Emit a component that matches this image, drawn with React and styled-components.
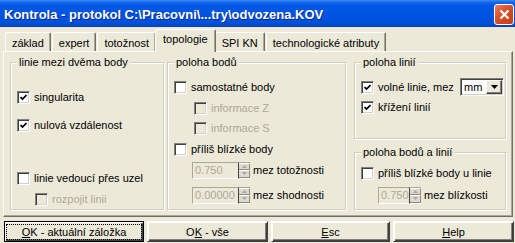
import React from "react";
import styled, { createGlobalStyle } from "styled-components";

const Global = createGlobalStyle`
  html, body {
    margin: 0;
    padding: 0;
  }
  body {
    background: #ece9d8;
    font-family: "Liberation Sans", Arial, sans-serif;
    font-size: 11px;
    color: #000;
    width: 515px;
    height: 243px;
    overflow: hidden;
  }
`;

const Window = styled.div`
  width: 515px;
  height: 243px;
  display: flex;
  flex-direction: column;
  background: #ece9d8;
`;

const TitleBar = styled.div`
  height: 27px;
  display: flex;
  align-items: flex-start;
  justify-content: space-between;
  background: linear-gradient(
    to bottom,
    #3b8cf5 0px,
    #166ceb 2px,
    #0258e4 5px,
    #0054e3 50%,
    #0050da 85%,
    #0043c0 100%
  );
`;

const TitleText = styled.div`
  padding: 7px 0 0 4px;
  color: #fff;
  font-size: 13px;
  font-weight: bold;
  line-height: 15px;
  white-space: nowrap;
  text-shadow: 1px 1px 0 #0a2a8a;
`;

const CloseButton = styled.div`
  width: 20px;
  height: 21px;
  margin: 4px 1px 0 0;
  box-sizing: border-box;
  border: 1px solid #fff;
  border-radius: 3px;
  background: linear-gradient(135deg, #e9805e 0%, #d9532c 40%, #c53b15 100%);
  display: flex;
  align-items: center;
  justify-content: center;
`;

const TabStrip = styled.div`
  height: 24px;
  display: flex;
  align-items: flex-end;
  padding-left: 5px;
  position: relative;
  z-index: 1;
`;

const Tab = styled.div`
  box-sizing: border-box;
  height: ${(p) => (p.$active ? "23px" : "19px")};
  margin: ${(p) => (p.$active ? "0 -1px -1px -2px" : "0 1px 0 0")};
  padding: ${(p) => (p.$active ? "2px 7px 0" : "3px 6px 0")};
  line-height: 14px;
  background: #ece9d8;
  border-top: 1px solid #fff;
  border-left: 1px solid #fff;
  border-right: 1px solid #716f64;
  box-shadow: inset -1px 0 0 #aca899;
  border-radius: 2px 2px 0 0;
  white-space: nowrap;
  position: relative;
  z-index: ${(p) => (p.$active ? 2 : 1)};
`;

const Panel = styled.div`
  box-sizing: border-box;
  margin-left: 3px;
  width: 510px;
  height: 166px;
  border-top: 1px solid #fff;
  border-left: 1px solid #fff;
  border-right: 1px solid #716f64;
  border-bottom: 1px solid #716f64;
  box-shadow: inset -1px -1px 0 #aca899;
  padding: 4px 0 0 6px;
  display: grid;
  grid-template-columns: 154px 179px 157px;
  column-gap: 3px;
  align-items: start;
`;

const Column = styled.div`
  display: flex;
  flex-direction: column;
  gap: 7px;
  margin-left: ${(p) => p.$shift || 0}px;
`;

const Group = styled.fieldset`
  box-sizing: border-box;
  margin: 0;
  height: ${(p) => p.$h}px;
  padding: 0 1px 0 6px;
  border: 1px solid #d0d0bf;
  border-top-color: #d0d0bf;
  border-radius: 0;
  box-shadow: inset 1px 1px 0 #fff, 1px 1px 0 #fff;
  display: flex;
  flex-direction: column;
  min-width: 0;
`;

const Caption = styled.legend`
  padding: 0 2px;
  line-height: 13px;
  background: #ece9d8;
  white-space: nowrap;
`;

const Row = styled.div`
  height: 20px;
  display: flex;
  align-items: center;
  margin-top: ${(p) => p.$top || 0}px;
  margin-left: ${(p) => p.$indent || 0}px;
  color: ${(p) => (p.$disabled ? "#aca899" : "#000")};
  white-space: nowrap;
`;

const Box = styled.span`
  box-sizing: border-box;
  width: 13px;
  height: 13px;
  flex: none;
  margin-right: 4px;
  border-top: 1px solid #808080;
  border-left: 1px solid #808080;
  border-right: 1px solid #fff;
  border-bottom: 1px solid #fff;
  box-shadow: inset 1px 1px 0 #404040, inset -1px -1px 0 #d4d0c8;
  background: ${(p) => (p.$disabled ? "#ece9d8" : "#fff")};
  display: flex;
  align-items: center;
  justify-content: center;
`;

const Spin = styled.span`
  display: flex;
  width: ${(p) => p.$w}px;
  height: 17px;
  flex: none;
  margin-right: 3px;
`;

const SpinEdit = styled.span`
  box-sizing: border-box;
  flex: 1;
  border-top: 1px solid #aca899;
  border-left: 1px solid #aca899;
  border-bottom: 1px solid #fff;
  border-right: 1px solid #404040;
  color: #aca899;
  font-size: 11px;
  line-height: 15px;
  padding-left: 2px;
  overflow: hidden;
`;

const SpinArrows = styled.span`
  box-sizing: border-box;
  width: 11px;
  display: flex;
  flex-direction: column;
  border-bottom: 1px solid #fff;
  border-top: 1px solid #aca899;
`;

const SpinHalf = styled.span`
  flex: 1;
  background: #dcdad0;
  border-top: 1px solid #fff;
  border-right: 1px solid #8d8b80;
  border-bottom: 1px solid #8d8b80;
  display: flex;
  align-items: center;
  justify-content: center;
`;

const Combo = styled.div`
  box-sizing: border-box;
  margin-left: auto;
  width: 44px;
  height: 18px;
  display: flex;
  background: #fff;
  border-top: 1px solid #808080;
  border-left: 1px solid #808080;
  border-right: 1px solid #fff;
  border-bottom: 1px solid #fff;
  box-shadow: inset 1px 1px 0 #404040, inset -1px -1px 0 #d4d0c8;
  color: #000;
`;

const ComboText = styled.span`
  flex: 1;
  padding-left: 3px;
  line-height: 16px;
`;

const ComboButton = styled.span`
  box-sizing: border-box;
  width: 16px;
  margin: 1px 1px 1px 0;
  background: #ece9d8;
  border-top: 1px solid #fff;
  border-left: 1px solid #fff;
  border-right: 1px solid #404040;
  border-bottom: 1px solid #404040;
  box-shadow: inset -1px -1px 0 #808080;
  display: flex;
  align-items: center;
  justify-content: center;
`;

const ButtonRow = styled.div`
  display: flex;
  gap: 3px;
  margin: 4px 0 0 4px;
`;

const Button = styled.div`
  box-sizing: border-box;
  width: ${(p) => p.$w}px;
  height: 21px;
  display: flex;
  align-items: center;
  justify-content: center;
  background: #ece9d8;
  border: 1px solid ${(p) => (p.$default ? "#000" : "#ece9d8")};
  box-shadow: ${(p) =>
    p.$default
      ? "inset 1px 1px 0 #fff, inset -1px -1px 0 #404040, inset -2px -2px 0 #808080"
      : "inset 1px 1px 0 #fff, inset -1px -1px 0 #404040, inset -2px -2px 0 #808080"};
  border-top-color: ${(p) => (p.$default ? "#000" : "#fff")};
  border-left-color: ${(p) => (p.$default ? "#000" : "#fff")};
  border-right-color: ${(p) => (p.$default ? "#000" : "#404040")};
  border-bottom-color: ${(p) => (p.$default ? "#000" : "#404040")};
  position: relative;
`;

const Focus = styled.span`
  padding: 1px 7px 0;
  line-height: 13px;
  outline: ${(p) => (p.$on ? "1px dotted #000" : "none")};
  width: ${(p) => (p.$on ? "120px" : "auto")};
  text-align: center;
  white-space: nowrap;
`;

const Key = styled.span`
  text-decoration: underline;
`;

function Check({ checked, disabled }) {
  return (
    <Box $disabled={disabled}>
      {checked && (
        <svg width="7" height="7" viewBox="0 0 7 7">
          <path d="M0.5 3 L2.5 5 L6.5 1" stroke="#000" strokeWidth="1.7" fill="none" />
        </svg>
      )}
    </Box>
  );
}

function Spinner({ value, width }) {
  return (
    <Spin $w={width}>
      <SpinEdit>{value}</SpinEdit>
      <SpinArrows>
        <SpinHalf>
          <svg width="5" height="3" viewBox="0 0 5 3">
            <path d="M2.5 0 L5 3 L0 3 Z" fill="#aca899" />
          </svg>
        </SpinHalf>
        <SpinHalf>
          <svg width="5" height="3" viewBox="0 0 5 3">
            <path d="M0 0 L5 0 L2.5 3 Z" fill="#aca899" />
          </svg>
        </SpinHalf>
      </SpinArrows>
    </Spin>
  );
}

const tabs = [
  "základ",
  "expert",
  "totožnost",
  "topologie",
  "SPI KN",
  "technologické atributy",
];

export default function App() {
  return (
    <Window>
      <Global />
      <TitleBar>
        <TitleText>Kontrola - protokol C:\Pracovni\...try\odvozena.KOV</TitleText>
        <CloseButton>
          <svg width="11" height="11" viewBox="0 0 11 11">
            <path d="M1.5 1.5 L9.5 9.5 M9.5 1.5 L1.5 9.5" stroke="#fff" strokeWidth="2.2" />
          </svg>
        </CloseButton>
      </TitleBar>

      <TabStrip>
        {tabs.map((t) => (
          <Tab key={t} $active={t === "topologie"}>
            {t}
          </Tab>
        ))}
      </TabStrip>

      <Panel>
        <Column>
          <Group $h={154}>
            <Caption>linie mezi dvěma body</Caption>
            <Row $top={18}>
              <Check checked />
              singularita
            </Row>
            <Row $top={8}>
              <Check checked />
              nulová vzdálenost
            </Row>
            <Row $top={33}>
              <Check />
              linie vedoucí přes uzel
            </Row>
            <Row $top={1} $indent={18} $disabled>
              <Check disabled />
              rozpojit linii
            </Row>
          </Group>
        </Column>

        <Column>
          <Group $h={154}>
            <Caption>poloha bodů</Caption>
            <Row $top={8}>
              <Check />
              samostatné body
            </Row>
            <Row $top={1} $indent={20} $disabled>
              <Check disabled />
              informace Z
            </Row>
            <Row $indent={20} $disabled>
              <Check disabled />
              informace S
            </Row>
            <Row $top={1}>
              <Check />
              příliš blízké body
            </Row>
            <Row $top={1} $indent={18}>
              <Spinner value="0.750" width={58} />
              mez totožnosti
            </Row>
            <Row $top={5} $indent={18}>
              <Spinner value="0.00000" width={58} />
              mez shodnosti
            </Row>
          </Group>
        </Column>

        <Column $shift={5}>
          <Group $h={83}>
            <Caption>poloha linií</Caption>
            <Row $top={8}>
              <Check checked />
              volné linie, mez
              <Combo>
                <ComboText>mm</ComboText>
                <ComboButton>
                  <svg width="7" height="4" viewBox="0 0 7 4">
                    <path d="M0 0 L7 0 L3.5 4 Z" fill="#000" />
                  </svg>
                </ComboButton>
              </Combo>
            </Row>
            <Row>
              <Check checked />
              křížení linií
            </Row>
          </Group>
          <Group $h={64}>
            <Caption>poloha bodů a linií</Caption>
            <Row $top={4}>
              <Check />
              příliš blízké body u linie
            </Row>
            <Row $top={2} $indent={17}>
              <Spinner value="0.750" width={43} />
              mez blízkosti
            </Row>
          </Group>
        </Column>
      </Panel>

      <ButtonRow>
        <Button $w={140} $default>
          <Focus $on>
            <Key>O</Key>K - aktuální záložka
          </Focus>
        </Button>
        <Button $w={121}>
          <Focus>
            O<Key>K</Key> - vše
          </Focus>
        </Button>
        <Button $w={119}>
          <Focus>
            <Key>E</Key>sc
          </Focus>
        </Button>
        <Button $w={121}>
          <Focus>
            <Key>H</Key>elp
          </Focus>
        </Button>
      </ButtonRow>
    </Window>
  );
}
